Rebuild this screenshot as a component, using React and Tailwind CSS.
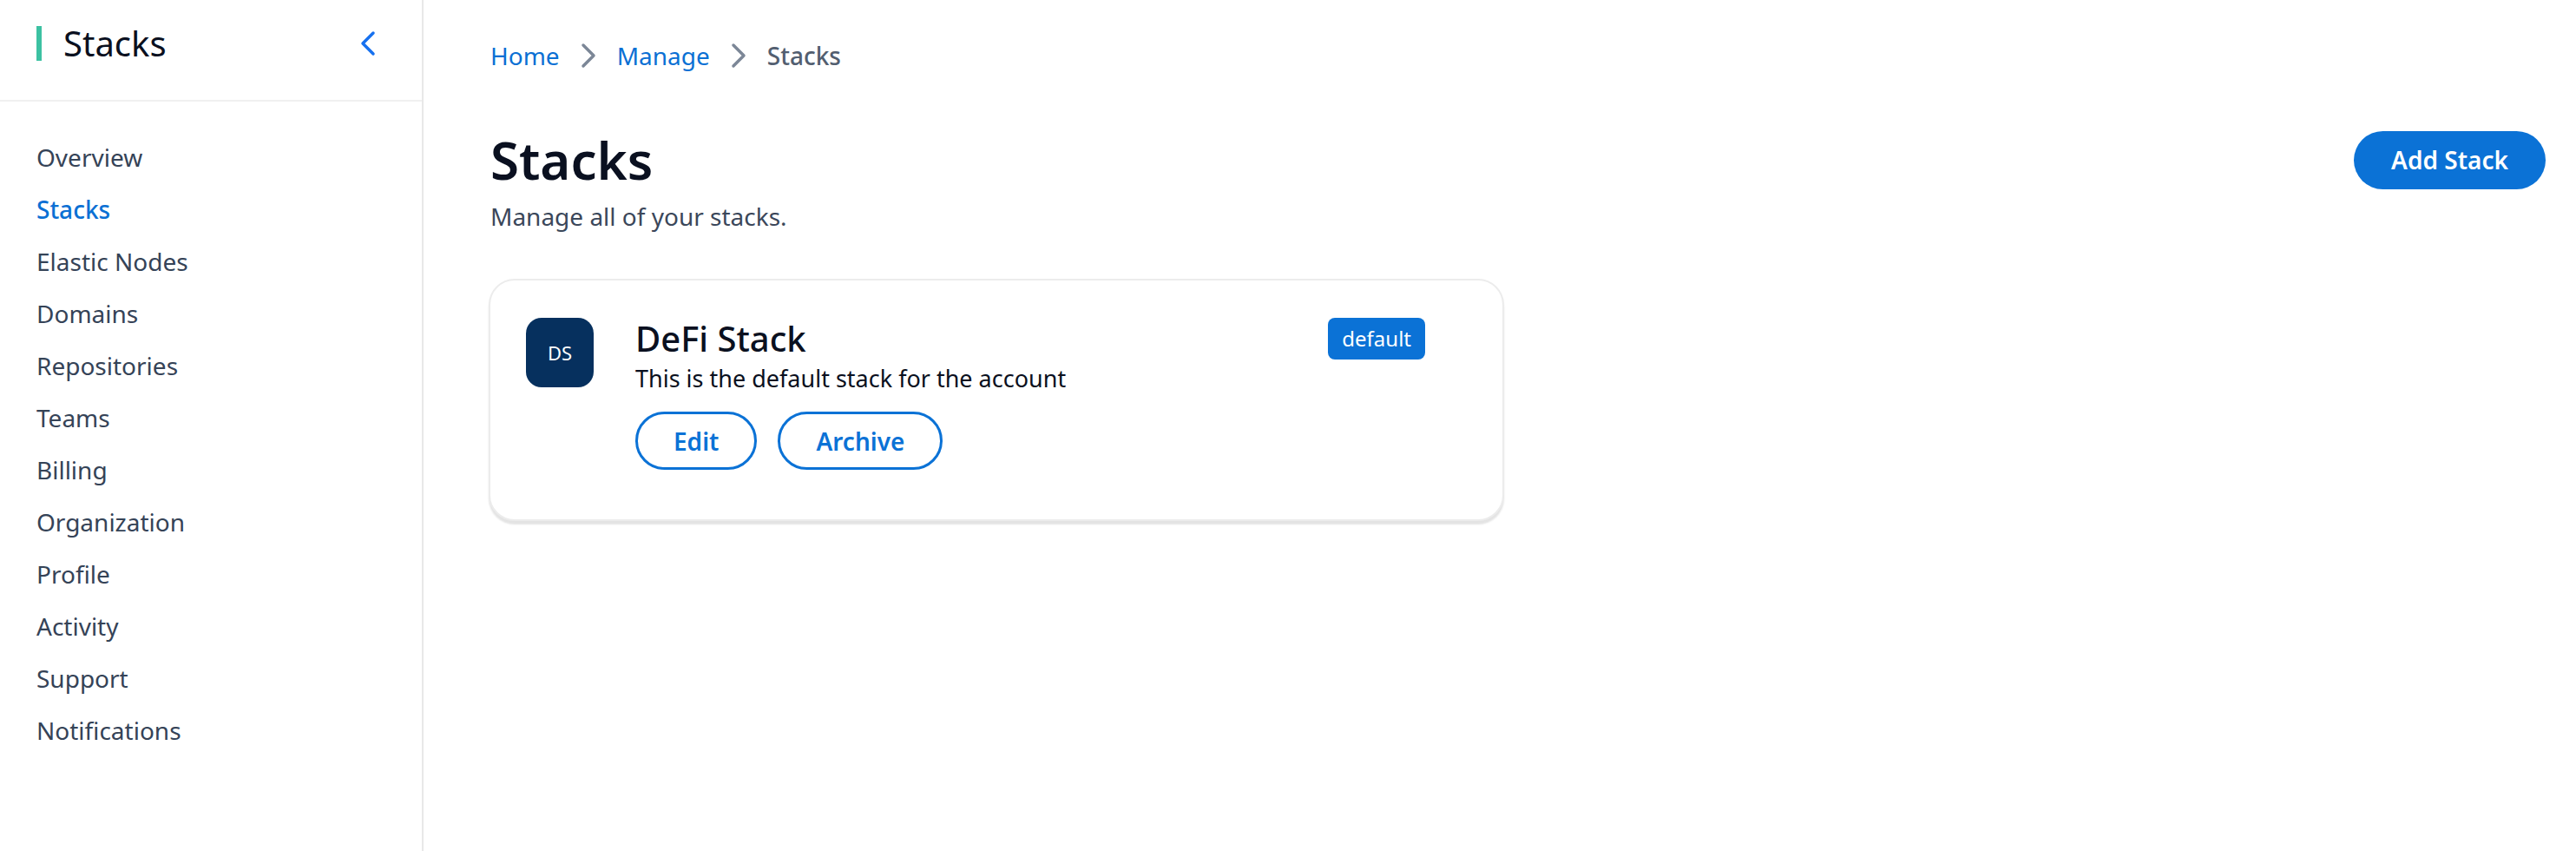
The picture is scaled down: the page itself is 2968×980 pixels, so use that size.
import React from 'react';

const NAV = [
  'Overview',
  'Stacks',
  'Elastic Nodes',
  'Domains',
  'Repositories',
  'Teams',
  'Billing',
  'Organization',
  'Profile',
  'Activity',
  'Support',
  'Notifications',
];

function Chevron({ dir = 'right', className }) {
  const d = dir === 'right' ? 'M3 3 L15 15 L3 27' : 'M15 3 L3 15 L15 27';
  return (
    <svg width="18" height="30" viewBox="0 0 18 30" fill="none" className={className}>
      <path d={d} stroke="currentColor" strokeWidth="3.5" strokeLinecap="round" strokeLinejoin="round" />
    </svg>
  );
}

function Sidebar() {
  return (
    <aside className="w-[488px] shrink-0 border-r-2 border-[#e8e8e8] bg-white min-h-screen">
      <div className="h-[117px] pb-[15px] flex items-center justify-between pl-[42px] pr-[53px] border-b-2 border-[#f0f0f0]">
        <div className="flex items-center">
          <span className="w-[6px] h-[40px] bg-[#3cc1a2]" />
          <span className="ml-[25px] text-[40px] leading-[48px] text-[#0a1020]">Stacks</span>
        </div>
        <Chevron dir="left" className="text-[#1771ef]" />
      </div>
      <nav className="pt-[34px] pl-[42px]">
        {NAV.map(item => (
          <div
            key={item}
            className={`h-[60px] flex items-center text-[28px] ${item === 'Stacks' ? 'text-[#0b70d4] font-medium' : 'text-[#354357]'}`}
          >
            {item}
          </div>
        ))}
      </nav>
    </aside>
  );
}

function StackCard() {
  return (
    <div className="w-[1170px] mt-[52px] rounded-[30px] border-2 border-[#ececec] bg-white shadow-[0_4px_2px_rgba(0,0,0,0.11)] pl-[41px] pr-[89px] pt-[43px] pb-[57px] flex items-start">
      <div className="w-[78px] h-[80px] rounded-[18px] bg-[#06305e] flex items-center justify-center text-white text-[22px]">
        DS
      </div>
      <div className="ml-[48px] flex-1">
        <div className="text-[40px] leading-[48px] font-medium text-[#0a1020]">DeFi Stack</div>
        <div className="mt-[2px] text-[27px] leading-[40px] text-[#0a1020]">This is the default stack for the account</div>
        <div className="mt-[18px] flex gap-[24px]">
          <button className="h-[67px] px-[41px] rounded-full border-[3px] border-[#0b72d6] text-[#0b72d6] text-[28px] font-semibold">Edit</button>
          <button className="h-[67px] px-[41px] rounded-full border-[3px] border-[#0b72d6] text-[#0b72d6] text-[28px] font-semibold">Archive</button>
        </div>
      </div>
      <span className="h-[48px] px-[16px] rounded-[8px] bg-[#0b72d6] text-white text-[24px] flex items-center">default</span>
    </div>
  );
}

export default function App() {
  return (
    <div className="flex min-h-screen bg-white" style={{ fontFamily: '"Noto Sans", "Open Sans", sans-serif' }}>
      <Sidebar />
      <main className="flex-1 pl-[75px] pr-[35px] pt-[44px]">
        <div className="flex items-center text-[28px] leading-[40px] pl-[2px]">
          <span className="text-[#0b70d4]">Home</span>
          <Chevron className="mx-[24px] text-[#7c8797]" />
          <span className="text-[#0b70d4]">Manage</span>
          <Chevron className="mx-[24px] text-[#7c8797]" />
          <span className="text-[#525e70] font-medium">Stacks</span>
        </div>
        <div className="mt-[64px] flex items-center justify-between pl-[2px]">
          <h1 className="text-[60px] leading-[72px] font-semibold text-[#0a1020]">Stacks</h1>
          <button className="w-[221px] h-[67px] rounded-full bg-[#0b72d6] text-white text-[28px] font-semibold">Add Stack</button>
        </div>
        <p className="mt-[9px] pl-[2px] text-[28px] leading-[40px] text-[#3b475a]">Manage all of your stacks.</p>
        <StackCard />
      </main>
    </div>
  );
}
